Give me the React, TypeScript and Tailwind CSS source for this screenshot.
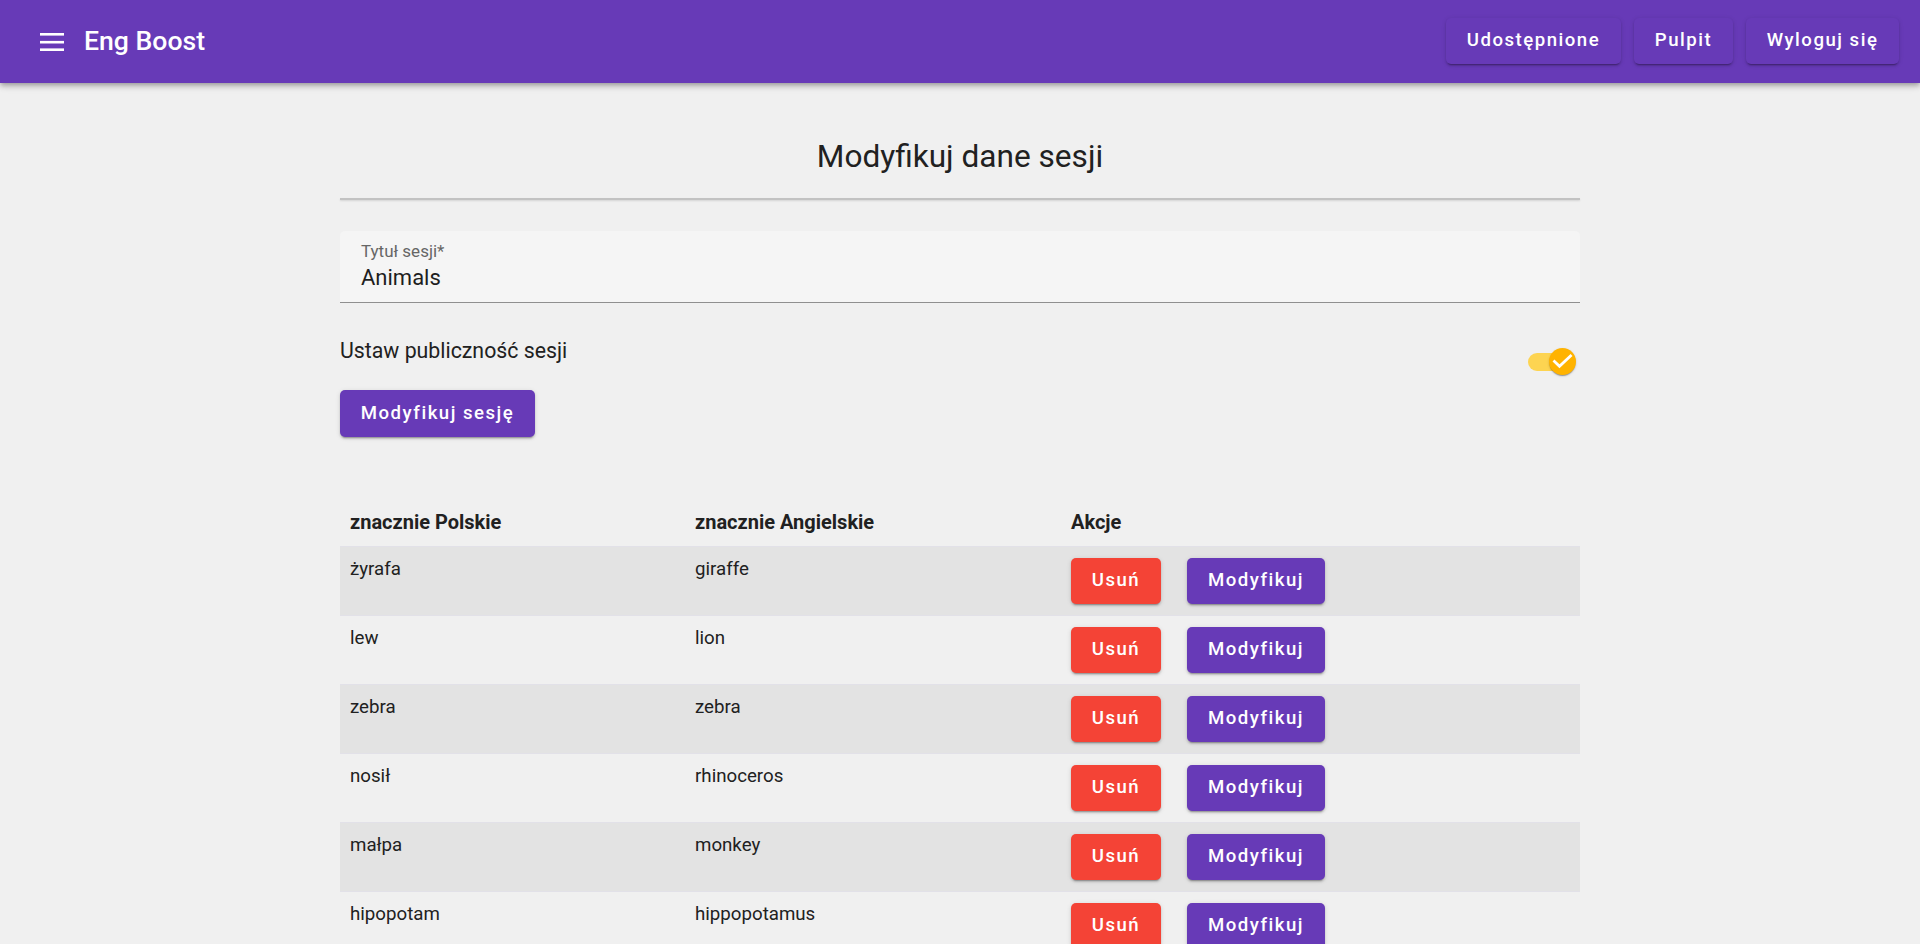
import React from 'react';

const WORDS: [string, string][] = [
  ['żyrafa', 'giraffe'],
  ['lew', 'lion'],
  ['zebra', 'zebra'],
  ['nosił', 'rhinoceros'],
  ['małpa', 'monkey'],
  ['hipopotam', 'hippopotamus'],
  ['słoń', 'elephant'],
  ['tygrys', 'tiger'],
  ['niedźwiedź', 'bear'],
  ['wilk', 'wolf'],
  ['lis', 'fox'],
  ['krokodyl', 'crocodile'],
  ['wielbłąd', 'camel'],
  ['kangur', 'kangaroo'],
  ['pingwin', 'penguin'],
  ['sowa', 'owl'],
  ['orzeł', 'eagle'],
  ['delfin', 'dolphin'],
  ['wąż', 'snake'],
  ['żółw', 'turtle'],
];

const raised =
  'shadow-[0_3px_1px_-2px_rgba(0,0,0,0.2),0_2px_2px_0_rgba(0,0,0,0.14),0_1px_5px_0_rgba(0,0,0,0.12)]';

function MenuIcon() {
  return (
    <svg width="24" height="18" viewBox="0 0 24 18" className="block">
      <rect x="0" y="0" width="24" height="2.6" fill="white" />
      <rect x="0" y="7.9" width="24" height="2.6" fill="white" />
      <rect x="0" y="15.4" width="24" height="2.6" fill="white" />
    </svg>
  );
}

function Toggle() {
  return (
    <div className="relative w-[48px] h-[27px] mr-[4px] mt-[10px]">
      <div className="absolute left-0 top-[4.5px] w-[37px] h-[18px] rounded-full bg-[#fdd451]" />
      <div className="absolute right-0 top-0 w-[27px] h-[27px] rounded-full bg-[#ffb300] shadow-[0_2px_1px_-1px_rgba(0,0,0,0.2),0_1px_1px_0_rgba(0,0,0,0.14),0_1px_3px_0_rgba(0,0,0,0.12)] flex items-center justify-center">
        <svg width="27" height="27" viewBox="0 0 27 27">
          <path d="M5.5 13.5 L10.5 18.3 L21.5 8" stroke="white" strokeWidth="2.8" fill="none" strokeLinecap="square" />
        </svg>
      </div>
    </div>
  );
}

export default function App() {
  return (
    <div className="min-h-screen bg-[#f0f0f0] font-['Roboto',sans-serif] text-[#212121]">
      {/* Toolbar */}
      <header className="relative z-10 h-[83px] bg-[#673ab7] flex items-center pl-[40px] pr-[21px] shadow-[0_2px_4px_-1px_rgba(0,0,0,0.2),0_4px_5px_0_rgba(0,0,0,0.14),0_1px_10px_0_rgba(0,0,0,0.12)]">
        <MenuIcon />
        <span className="ml-[20px] text-white text-[26.6px] font-medium leading-none">Eng Boost</span>
        <div className="ml-auto flex items-center gap-[13px] -mt-[1px]">
          <button className={`w-[175px] h-[46px] rounded-[5px] bg-[#673ab7] text-white text-[18.6px] font-medium tracking-[1.5px] ${raised}`}>
            Udostępnione
          </button>
          <button className={`w-[99px] h-[46px] rounded-[5px] bg-[#673ab7] text-white text-[18.6px] font-medium tracking-[1.5px] ${raised}`}>
            Pulpit
          </button>
          <button className={`w-[153px] h-[46px] rounded-[5px] bg-[#673ab7] text-white text-[18.6px] font-medium tracking-[1.5px] ${raised}`}>
            Wyloguj się
          </button>
        </div>
      </header>

      <main className="w-[1240px] mx-auto pt-[55px] pb-[40px]">
        <h1 className="text-center text-[31.6px] leading-[38px] font-normal">Modyfikuj dane sesji</h1>
        <div className="mt-[22px] h-[2px] bg-[#c2c2c2] shadow-[0_1px_2px_rgba(0,0,0,0.12)]" />

        {/* Title field */}
        <div className="mt-[31px] h-[72px] bg-[#f5f5f5] rounded-t-[5px] border-b border-[#8f8f8f] px-[21px] pt-[10px]">
          <div className="text-[17px] leading-[20px] text-[#666666]">Tytuł sesji*</div>
          <div className="mt-[4px] text-[22px] leading-[25px] text-[#1e1e1e]">Animals</div>
        </div>

        <div className="mt-[35px] flex items-start justify-between">
          <span className="text-[21.3px] leading-[26px]">Ustaw publiczność sesji</span>
          <Toggle />
        </div>

        <button className={`mt-[15px] w-[195px] h-[47px] rounded-[5px] bg-[#673ab7] text-white text-[18.6px] font-medium tracking-[1.5px] ${raised}`}>
          Modyfikuj sesję
        </button>

        {/* Words table */}
        <table className="mt-[53px] w-full border-collapse table-fixed">
          <colgroup>
            <col className="w-[345px]" />
            <col className="w-[376px]" />
            <col />
          </colgroup>
          <thead>
            <tr className="h-[56px]">
              <th className="text-left align-bottom pl-[10px] pb-[12px] text-[20px] leading-[24px] font-bold">znacznie Polskie</th>
              <th className="text-left align-bottom pl-[10px] pb-[12px] text-[20px] leading-[24px] font-bold">znacznie Angielskie</th>
              <th className="text-left align-bottom pl-[10px] pb-[12px] text-[20px] leading-[24px] font-bold">Akcje</th>
            </tr>
          </thead>
          <tbody>
            {WORDS.map(([pl, en], i) => (
              <tr key={pl} className={`border-t border-[#e2e1e8] ${i % 2 === 0 ? 'bg-[#e3e3e3]' : ''}`}>
                <td className="align-top pl-[10px] pt-[11px] text-[18.7px] leading-[22px]">{pl}</td>
                <td className="align-top pl-[10px] pt-[11px] text-[18.7px] leading-[22px]">{en}</td>
                <td className="align-top pl-[10px] pt-[11px] pb-[11px]">
                  <div className="flex gap-[26px]">
                    <button className={`w-[90px] h-[46px] rounded-[5px] bg-[#f44336] text-white text-[18.6px] font-medium tracking-[1.5px] ${raised}`}>
                      Usuń
                    </button>
                    <button className={`w-[138px] h-[46px] rounded-[5px] bg-[#673ab7] text-white text-[18.6px] font-medium tracking-[1.5px] ${raised}`}>
                      Modyfikuj
                    </button>
                  </div>
                </td>
              </tr>
            ))}
          </tbody>
        </table>
      </main>
    </div>
  );
}
